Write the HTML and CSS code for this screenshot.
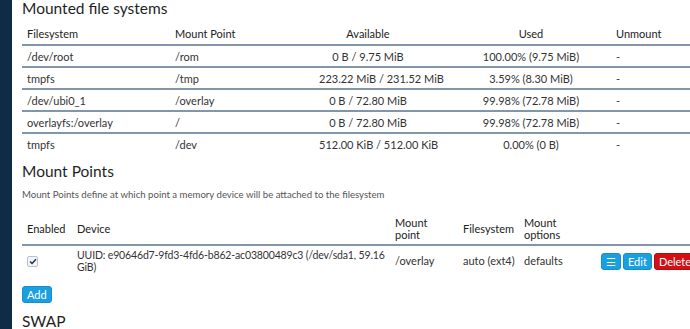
FILE: index.html
```html
<!DOCTYPE html>
<html lang="en">
<head>
    <meta charset="UTF-8">
    <title>Mount Points</title>
    <link rel="stylesheet" href="styles.css">
</head>
<body>
    <div class="sidebar"></div>
    <div class="main">
        <h3 class="title">Mounted file systems</h3>
        <table class="mounts">
            <tr class="head">
                <th class="c-fs">Filesystem</th>
                <th class="c-mp">Mount Point</th>
                <th class="c-av">Available</th>
                <th class="c-used">Used</th>
                <th class="c-un">Unmount</th>
            </tr>
            <tr>
                <td>/dev/root</td><td>/rom</td><td class="center">0 B / 9.75 MiB</td><td class="used">100.00% (9.75 MiB)</td><td>-</td>
            </tr>
            <tr>
                <td>tmpfs</td><td>/tmp</td><td class="center">223.22 MiB / 231.52 MiB</td><td class="used">3.59% (8.30 MiB)</td><td>-</td>
            </tr>
            <tr>
                <td>/dev/ubi0_1</td><td>/overlay</td><td class="center">0 B / 72.80 MiB</td><td class="used">99.98% (72.78 MiB)</td><td>-</td>
            </tr>
            <tr>
                <td>overlayfs:/overlay</td><td>/</td><td class="center">0 B / 72.80 MiB</td><td class="used">99.98% (72.78 MiB)</td><td>-</td>
            </tr>
            <tr>
                <td>tmpfs</td><td>/dev</td><td class="center">512.00 KiB / 512.00 KiB</td><td class="used">0.00% (0 B)</td><td>-</td>
            </tr>
        </table>

        <h3 class="title section">Mount Points</h3>
        <p class="desc">Mount Points define at which point a memory device will be attached to the filesystem</p>

        <table class="points">
            <tr class="head">
                <th class="p-en">Enabled</th>
                <th class="p-dev">Device</th>
                <th class="p-mp">Mount point</th>
                <th class="p-fs">Filesystem</th>
                <th class="p-opt">Mount options</th>
                <th class="p-act"></th>
            </tr>
            <tr>
                <td><span class="check">
                    <svg width="8" height="7" viewBox="0 0 8 7"><path d="M1 3.6 L3 5.5 L7 1.2" fill="none" stroke="#1b2f4a" stroke-width="1.4"/></svg>
                </span></td>
                <td class="device">UUID: e90646d7-9fd3-4fd6-b862-ac03800489c3 (/dev/sda1, 59.16 GiB)</td>
                <td class="nowrap">/overlay</td>
                <td class="nowrap">auto (ext4)</td>
                <td class="nowrap">defaults</td>
                <td class="actions">
                    <div class="btn-row">
                        <span class="btn blue menu">&#9776;</span>
                        <span class="btn blue">Edit</span>
                        <span class="btn red">Delete</span>
                    </div>
                </td>
            </tr>
        </table>

        <span class="btn blue add">Add</span>

        <h3 class="title swap">SWAP</h3>
    </div>
</body>
</html>
```

FILE: styles.css
```css
body {
    margin: 0;
    display: flex;
    height: 100vh;
    overflow: hidden;
    background-color: #fff;
    font-family: 'Lato', 'Open Sans', sans-serif;
    font-size: 11px;
    color: #333;
}
.sidebar {
    width: 12px;
    flex-shrink: 0;
    background-color: #0f2b46;
}
.main {
    flex: 1;
    padding-left: 10px;
    min-width: 0;
}
.title {
    margin: 0;
    font-size: 15.5px;
    font-weight: normal;
    color: #1f1f1f;
    line-height: 16px;
}
/* Mounted file systems table */
.mounts {
    width: 668px;
    border-collapse: collapse;
    margin-top: 7px;
    table-layout: fixed;
}
.mounts th, .mounts td {
    padding: 0 5px;
    height: 20px;
    text-align: left;
    font-weight: normal;
    white-space: nowrap;
}
.mounts th {
    height: 21px;
    color: #222;
}
.mounts td { border-top: 2px solid #8196aa; }
.mounts .c-fs { width: 138px; }
.mounts .c-mp { width: 134px; }
.mounts .c-av { width: 98px; text-align: center; }
.mounts .c-used { width: 150px; padding-left: 34px; text-align: center; }
.mounts .used { padding-left: 34px; text-align: center; }
.center { text-align: center !important; }

.section { margin-top: 9px; }
.desc {
    margin: 10px 0 0;
    font-size: 9.6px;
    line-height: 12px;
    color: #555;
}
/* Mount points table */
.points {
    width: 700px;
    border-collapse: collapse;
    margin-top: 13px;
    table-layout: fixed;
}
.points th, .points td {
    padding: 0 5px;
    text-align: left;
    font-weight: normal;
    line-height: 12px;
    vertical-align: middle;
}
.points th {
    height: 30px;
    color: #222;
    border-bottom: 2px solid #8196aa;
}
.points td { height: 30px; }
.points .device {
    font-size: 10.5px;
    letter-spacing: -0.15px;
}
.nowrap { white-space: nowrap; }
.p-en { width: 40px; }
.p-dev { width: 308px; }
.p-mp { width: 58px; }
.p-fs { width: 51px; }
.p-opt { width: 68px; }
.check {
    display: inline-flex;
    align-items: center;
    justify-content: center;
    width: 9px;
    height: 9px;
    border: 1px solid #b7c0cb;
    border-radius: 2px;
    background-color: #f2f5f8;
}
.points .actions {
    padding-left: 4px;
    padding-right: 0;
}
.btn-row {
    display: flex;
    gap: 2px;
}
.btn {
    display: inline-block;
    padding: 1px 4px;
    border-radius: 3px;
    color: #fff;
    font-size: 11px;
    line-height: 13px;
    white-space: nowrap;
}
.menu {
    padding: 1px 4px;
    font-size: 11px;
}
.blue { background-color: #1a9fe0; border: 1px solid #178fca; }
.red { background-color: #d20f14; border: 1px solid #b50c10; }
.add {
    display: block;
    width: fit-content;
    margin-top: 10px;
}
.swap { margin-top: 10px; }
```
